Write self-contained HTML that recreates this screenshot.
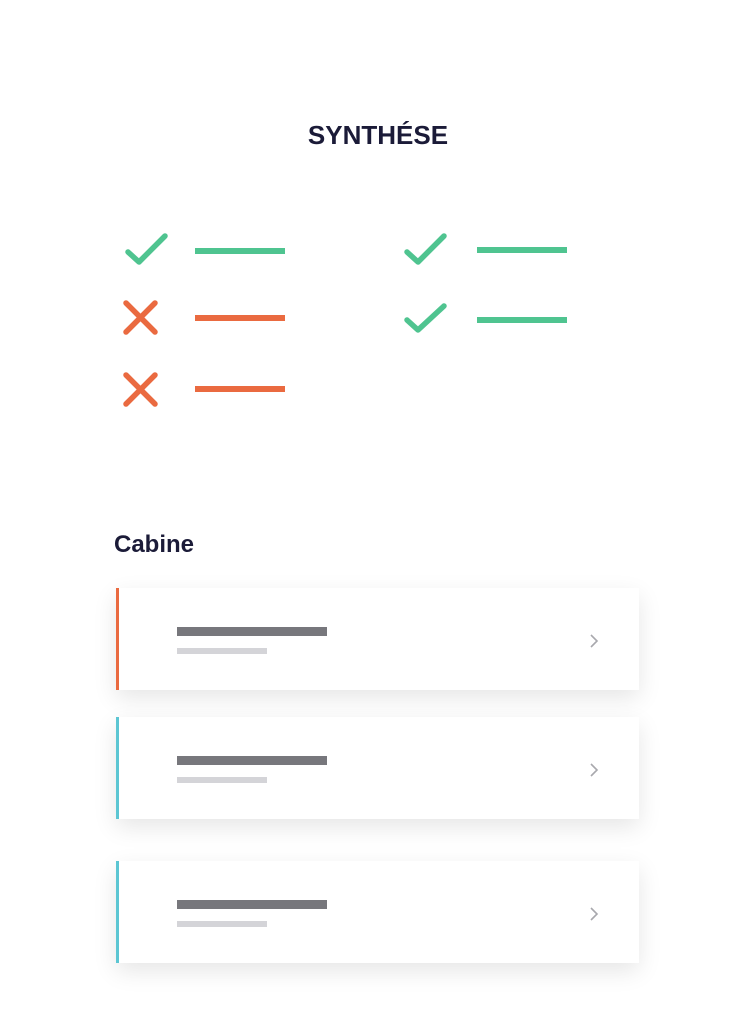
<!DOCTYPE html>
<html><head><meta charset="utf-8"><style>
*{margin:0;padding:0;box-sizing:border-box}
body{width:756px;height:1023px;background:#fff;position:relative;overflow:hidden;font-family:"Liberation Sans",sans-serif;color:#1b1b38}
.a{position:absolute}
.t{left:0;width:756px;text-align:center;top:118px;font-size:26px;font-weight:bold;line-height:34px}
.c{left:114px;top:528px;font-size:24px;font-weight:bold;line-height:34px}
.ln{height:6px}
.g{background:#4fc490}.o{background:#ea6a40}
.card{left:116px;width:523px;height:102px;background:#fff;box-shadow:0 8px 22px rgba(0,0,0,0.10)}
.card .b{position:absolute;left:0;top:0;width:3px;height:102px}
.card .d{position:absolute;left:61px;top:39px;width:150px;height:9px;background:#77777c}
.card .l{position:absolute;left:61px;top:60px;width:90px;height:6px;background:#d4d4d8}
.card svg{position:absolute;left:473px;top:46px}
</style></head><body>
<div class="a t">SYNTHÉSE</div>
<svg class="a" style="left:0;top:0" width="756" height="450">
<g fill="none" stroke-linecap="round" stroke-linejoin="round" stroke-width="5.5">
<path d="M128 252 L139 262 L165 236" stroke="#4fc490"/>
<path d="M407 252 L418 262 L444 236" stroke="#4fc490"/>
<path d="M407 320 L418 330 L444 306" stroke="#4fc490"/>
<path d="M126 303 L155 332 M155 303 L126 332" stroke="#ea6a40"/>
<path d="M126 375 L155 404 M155 375 L126 404" stroke="#ea6a40"/>
</g></svg>
<div class="a ln g" style="left:195px;top:248px;width:90px"></div>
<div class="a ln o" style="left:195px;top:315px;width:90px"></div>
<div class="a ln o" style="left:195px;top:386px;width:90px"></div>
<div class="a ln g" style="left:477px;top:247px;width:90px"></div>
<div class="a ln g" style="left:477px;top:317px;width:90px"></div>
<div class="a c">Cabine</div>
<div class="a card" style="top:588px"><div class="b o"></div><div class="d"></div><div class="l"></div><svg width="10" height="14"><path d="M2 1 L8 7 L2 13" fill="none" stroke="#a8a8ad" stroke-width="1.6"/></svg></div>
<div class="a card" style="top:717px"><div class="b" style="background:#5cc6d3"></div><div class="d"></div><div class="l"></div><svg width="10" height="14"><path d="M2 1 L8 7 L2 13" fill="none" stroke="#a8a8ad" stroke-width="1.6"/></svg></div>
<div class="a card" style="top:861px"><div class="b" style="background:#5cc6d3"></div><div class="d"></div><div class="l"></div><svg width="10" height="14"><path d="M2 1 L8 7 L2 13" fill="none" stroke="#a8a8ad" stroke-width="1.6"/></svg></div>
</body></html>
